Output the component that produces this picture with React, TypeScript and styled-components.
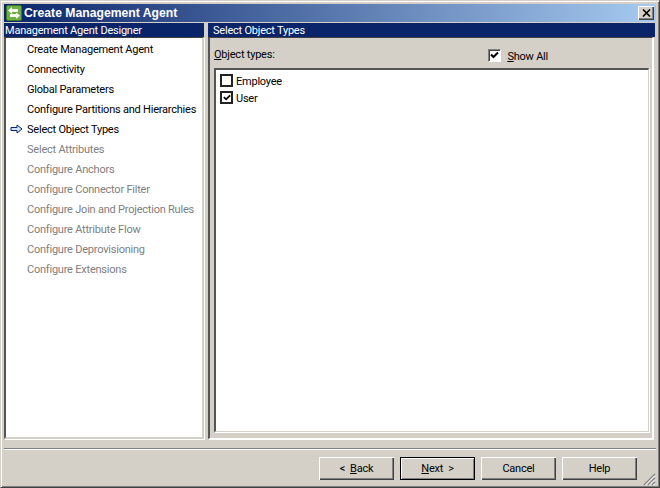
import React from "react";
import styled, { createGlobalStyle } from "styled-components";

const Global = createGlobalStyle`
  html, body { margin: 0; padding: 0; background: #d4d0c8; }
  body { width: 660px; height: 488px; overflow: hidden; font-family: Roboto, "Liberation Sans", Arial, sans-serif; font-size: 11px; letter-spacing: -0.22px; color: #000; }
`;

const Win = styled.div`
  box-sizing: border-box; width: 660px; height: 488px; display: flex; flex-direction: column;
  background: #d4d0c8;
  border-top: 1px solid #d4d0c8; border-left: 1px solid #d4d0c8;
  border-right: 1px solid #404040; border-bottom: 1px solid #404040;
  box-shadow: inset 1px 1px 0 #fff, inset -1px -1px 0 #808080;
  padding: 3px 3px 0;
`;
const TitleBar = styled.div`
  height: 18px; flex: none; display: flex; align-items: center; padding: 0 2px 0 2px; gap: 2px;
  background: linear-gradient(90deg, #0a246a, #a6caf0);
  color: #fff; font-family: "Liberation Sans", Arial, sans-serif; font-weight: bold; font-size: 12.2px; letter-spacing: 0;
`;
const TitleText = styled.span`flex: 1; white-space: nowrap; line-height: 14px; margin-top: -1px;`;
const CloseButton = styled.div`
  box-sizing: border-box; width: 16px; height: 14px; background: #d4d0c8; display: flex; align-items: center; justify-content: center;
  box-shadow: inset 1px 1px 0 #fff, inset -1px -1px 0 #404040, inset -2px -2px 0 #808080;
`;
const Panes = styled.div`
  height: 416px; flex: none; display: grid; grid-template-columns: 200px 447px; column-gap: 4px; margin-top: 1px;
`;
const Pane = styled.div`display: flex; flex-direction: column; min-width: 0;`;
const PaneHeader = styled.div<{ $pad: number }>`
  height: 14px; flex: none; background: #0a246a; color: #fff; line-height: 16px; overflow: hidden; padding-left: ${p => p.$pad}px; white-space: nowrap;
`;
const StepList = styled.ul`
  flex: 1; margin: 0; padding: 2px 0 0; list-style: none; background: #fff; box-sizing: border-box;
  border-top: 1px solid #404040; border-left: 2px solid #555;
  border-right: 2px solid #d4d0c8; border-bottom: 2px solid #d4d0c8;
  box-shadow: 1px 1px 0 #fff;
`;
const Step = styled.li<{ $off?: boolean }>`
  height: 20px; line-height: 20px; position: relative; padding-left: 21px; white-space: nowrap;
  color: ${p => (p.$off ? "#808080" : "#000")};
`;
const ArrowIcon = styled.svg`position: absolute; left: 4px; top: 4px;`;
const RightBody = styled.div`
  flex: 1; box-sizing: border-box; display: flex; flex-direction: column; padding: 9px 3px 6px 4px; margin-right: 2px;
  border-top: 1px solid #404040; border-left: 2px solid #555; box-shadow: 1px 1px 0 #fff;
  border-bottom: 1px solid #fff; border-right: 1px solid #fff;
`;
const OptionsRow = styled.div`
  height: 21px; flex: none; display: flex; justify-content: space-between; align-items: flex-start; padding-right: 101px;
`;
const Label = styled.span`line-height: 14px; margin-top: 1px; u { text-decoration-thickness: 1px; text-underline-offset: 1px; }`;
const ShowAll = styled.label`display: flex; align-items: center; gap: 6px; height: 17px; u { text-decoration-thickness: 1px; text-underline-offset: 1px; }`;
const BoxText = styled.span`padding-top: 2px;`;
const Box = styled.span`
  box-sizing: border-box; width: 13px; height: 13px; flex: none; background: #fff; display: inline-flex; align-items: center; justify-content: center;
  border: 2px solid #222;
`;
const RaisedBox = styled(Box)`
  border: 1px solid; border-color: #808080 #fff #fff #808080; box-shadow: inset 1px 1px 0 #404040;
`;
const ListBox = styled.div`
  flex: 1; box-sizing: border-box; background: #fff; padding: 2px 4px;
  border-top: 2px solid #555; border-left: 2px solid #555; border-right: 1px solid #d4d0c8; border-bottom: 1px solid #d4d0c8;
  box-shadow: 1px 1px 0 #fff;
`;
const ListRow = styled.div`height: 17px; display: flex; align-items: center; gap: 3px;`;
const Footer = styled.div`
  flex: 1; position: relative; margin-top: 9px; border-top: 1px solid #808080; box-shadow: inset 0 1px 0 #fff;
  display: flex; justify-content: flex-end; align-items: flex-start; gap: 6px; padding: 8px 19px 0 0;
`;
const Btn = styled.button<{ $def?: boolean }>`
  box-sizing: border-box; width: 75px; height: 23px; padding: 0; margin: 0; background: #d4d0c8; font: inherit; letter-spacing: inherit; color: #000; border: none;
  box-shadow: ${p => p.$def
    ? "inset 0 0 0 1px #000, inset 2px 2px 0 #fff, inset -2px -2px 0 #808080"
    : "inset 1px 1px 0 #fff, inset -1px -1px 0 #404040, inset -2px -2px 0 #808080"};
  u { text-decoration-thickness: 1px; text-underline-offset: 1px; }
`;
const Grip = styled.svg`position: absolute; right: 0; bottom: 1px;`;

const Check = ({ size = 9 }: { size?: number }) => (
  <svg width={size} height={size} viewBox="0 0 9 9"><path d="M1 3.5 L3.5 6 L8 1.5" fill="none" stroke="#000" strokeWidth="2" /></svg>
);

const done = ["Create Management Agent", "Connectivity", "Global Parameters", "Configure Partitions and Hierarchies"];
const later = ["Select Attributes", "Configure Anchors", "Configure Connector Filter", "Configure Join and Projection Rules", "Configure Attribute Flow", "Configure Deprovisioning", "Configure Extensions"];

export default function App() {
  return (
    <Win>
      <Global />
      <TitleBar>
        <svg width="16" height="16" viewBox="0 0 16 16">
          <rect x="0.5" y="0.5" width="15" height="15" rx="1.5" fill="#6fae47" stroke="#3c7a24" />
          <path d="M2 5.5 L6 2 V4 H12 V7 H6 V9 Z" fill="#f4f9ec" />
          <path d="M14 10.5 L10 14 V12 H4 V9 H10 V7.5 Z" fill="#f4f9ec" />
          <path d="M6 7.5 H10" stroke="#6fae47" strokeWidth="1" />
        </svg>
        <TitleText>Create Management Agent</TitleText>
        <CloseButton>
          <svg width="9" height="8" viewBox="0 0 9 8"><path d="M1 0.5 L8 7.5 M8 0.5 L1 7.5" stroke="#000" strokeWidth="1.6" /></svg>
        </CloseButton>
      </TitleBar>
      <Panes>
        <Pane>
          <PaneHeader $pad={1}>Management Agent Designer</PaneHeader>
          <StepList>
            {done.map(t => <Step key={t}>{t}</Step>)}
            <Step>
              <ArrowIcon width="13" height="10" viewBox="0 0 13 10">
                <path d="M1 3.5 H7 V1 L12 5 L7 9 V6.5 H1 Z" fill="#cfe2f7" stroke="#0a246a" />
              </ArrowIcon>
              Select Object Types
            </Step>
            {later.map(t => <Step key={t} $off>{t}</Step>)}
          </StepList>
        </Pane>
        <Pane>
          <PaneHeader $pad={5}>Select Object Types</PaneHeader>
          <RightBody>
            <OptionsRow>
              <Label><u>O</u>bject types:</Label>
              <ShowAll>
                <RaisedBox><Check /></RaisedBox>
                <BoxText><u>S</u>how All</BoxText>
              </ShowAll>
            </OptionsRow>
            <ListBox>
              <ListRow><Box /><BoxText>Employee</BoxText></ListRow>
              <ListRow><Box><Check size={8} /></Box><BoxText>User</BoxText></ListRow>
            </ListBox>
          </RightBody>
        </Pane>
      </Panes>
      <Footer>
        <Btn>&lt;&nbsp; <u>B</u>ack</Btn>
        <Btn $def><u>N</u>ext &nbsp;&gt;</Btn>
        <Btn>Cancel</Btn>
        <Btn>Help</Btn>
        <Grip width="14" height="14" viewBox="0 0 14 14">
          <path d="M13 2 L2 13 M13 6 L6 13 M13 10 L10 13" stroke="#808080" strokeWidth="1.4" />
          <path d="M13 3.5 L3.5 13 M13 7.5 L7.5 13 M13 11.5 L11.5 13" stroke="#fff" strokeWidth="1" />
        </Grip>
      </Footer>
    </Win>
  );
}
